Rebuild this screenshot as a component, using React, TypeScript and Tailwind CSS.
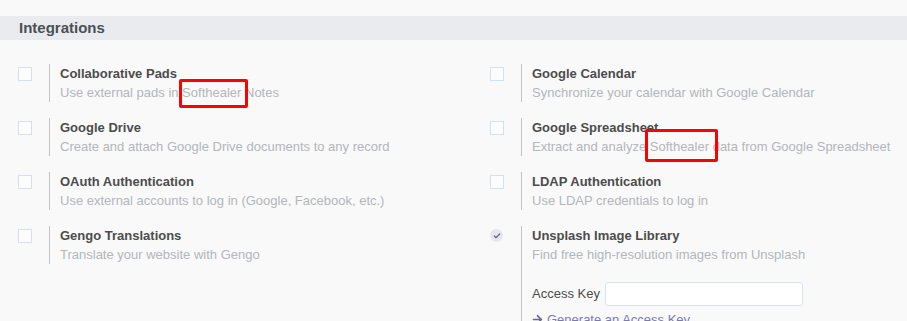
import { Check } from 'lucide-react';

interface Setting {
  title: string;
  desc: string;
  checked?: boolean;
}

const left: Setting[] = [
  { title: 'Collaborative Pads', desc: 'Use external pads in Softhealer Notes' },
  { title: 'Google Drive', desc: 'Create and attach Google Drive documents to any record' },
  { title: 'OAuth Authentication', desc: 'Use external accounts to log in (Google, Facebook, etc.)' },
  { title: 'Gengo Translations', desc: 'Translate your website with Gengo' },
];

const right: Setting[] = [
  { title: 'Google Calendar', desc: 'Synchronize your calendar with Google Calendar' },
  { title: 'Google Spreadsheet', desc: 'Extract and analyze Softhealer data from Google Spreadsheet' },
  { title: 'LDAP Authentication', desc: 'Use LDAP credentials to log in' },
];

const SettingBox = ({ s, children }: { s: Setting; children?: React.ReactNode }) => (
  <div className={`flex mb-[16px] ${children ? '' : 'h-[38px]'}`}>
    <div className="w-[49px] pl-[18px] pt-[3px] shrink-0">
      {s.checked ? (
        <div className="w-[13px] h-[13px] rounded-full bg-[#e6e6ee] flex items-center justify-center">
          <Check className="w-[8px] h-[8px] text-[#6b6a8c]" strokeWidth={4} />
        </div>
      ) : (
        <div className="w-[14px] h-[14px] border border-[#d3e2ef] bg-[#fcfcfc]" />
      )}
    </div>
    <div className="border-l border-[#c4c4c4] pl-[10px] pt-[1px] flex-1">
      <div className="text-[13px] leading-[18px] font-bold text-[#4c4c4c]">{s.title}</div>
      <div className="text-[13px] leading-[19px] text-[#b3b6ba] whitespace-nowrap">{s.desc}</div>
      {children}
    </div>
  </div>
);

export default function App() {
  return (
    <div
      className="relative w-[907px] h-[321px] overflow-hidden bg-[#f9f9f9] pt-[16px]"
      style={{ fontFamily: '"Liberation Sans", Arial, sans-serif' }}
    >
      {/* Section header */}
      <div className="h-[24px] bg-[#e9ebee] pl-[19px] text-[15px] leading-[24px] font-bold text-[#4b5057]">
        Integrations
      </div>

      <div className="grid grid-cols-[472px_1fr] pt-[24px]">
        <div>
          {left.map((s) => (
            <SettingBox key={s.title} s={s} />
          ))}
        </div>
        <div>
          {right.map((s) => (
            <SettingBox key={s.title} s={s} />
          ))}
          <SettingBox s={{ title: 'Unsplash Image Library', desc: 'Find free high-resolution images from Unsplash', checked: true }}>
            <div className="flex items-center mt-[18px]">
              <span className="text-[13px] text-[#4c4c4c] w-[73px] shrink-0 whitespace-nowrap">Access Key</span>
              <div className="w-[198px] h-[24px] border border-[#d9e4ef] rounded-[3px] bg-white" />
            </div>
            <div className="flex items-center gap-[4px] mt-[4px] text-[13px] text-[#7c7bad] whitespace-nowrap">
              <svg width="11" height="11" viewBox="0 0 448 512" fill="#6b6a8c">
                <path d="M190.5 66.9l22.2-22.2c9.4-9.4 24.6-9.4 33.9 0L441 239c9.4 9.4 9.4 24.6 0 33.9L246.6 467.3c-9.4 9.4-24.6 9.4-33.9 0l-22.2-22.2c-9.5-9.5-9.3-25 .4-34.3L311.4 296H24c-13.3 0-24-10.7-24-24v-32c0-13.3 10.7-24 24-24h287.4L190.9 101.2c-9.8-9.3-10-24.8-.4-34.3z" />
              </svg>
              Generate an Access Key
            </div>
          </SettingBox>
        </div>
      </div>

      {/* Annotation boxes */}
      <div className="absolute left-[179px] top-[79px] w-[69px] h-[29px] border-[3px] border-[#ff0000] rounded-[2px]" />
      <div className="absolute left-[645px] top-[129px] w-[73px] h-[33px] border-[3px] border-[#ff0000] rounded-[2px]" />
    </div>
  );
}
